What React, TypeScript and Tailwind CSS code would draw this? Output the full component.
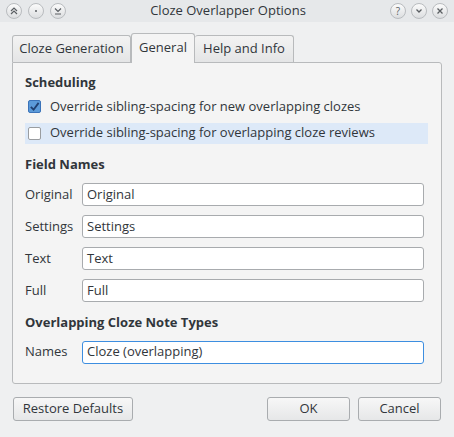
import React from 'react'

function TitleButton({ children }: { children: React.ReactNode }) {
  return (
    <div className="flex h-[16px] w-[16px] items-center justify-center rounded-full border border-[#b9bcbf] bg-gradient-to-b from-[#fbfbfb] to-[#dcdee0] text-[#5a5e62]">
      {children}
    </div>
  )
}

function Check({ checked }: { checked: boolean }) {
  return (
    <div
      className={
        'flex h-[13px] w-[13px] items-center justify-center rounded-[2px] border ' +
        (checked ? 'border-[#3b73b9] bg-[#5b9ad9]' : 'border-[#9a9da0] bg-white')
      }
    >
      {checked && (
        <svg width="11" height="11" viewBox="0 0 12 12">
          <path d="M2 6.5 L5 9.5 L10.5 2" fill="none" stroke="#1f3f70" strokeWidth="2" />
        </svg>
      )}
    </div>
  )
}

function Field({ label, value, focused }: { label: string; value: string; focused?: boolean }) {
  return (
    <div className="flex h-[23px] items-center">
      <div className="w-[57px] shrink-0">{label}</div>
      <div
        className={
          'flex h-full flex-1 items-center rounded-[3px] border bg-white px-[4px] ' +
          (focused ? 'border-[#3d8ee0]' : 'border-[#a8abae]')
        }
      >
        {value}
      </div>
    </div>
  )
}

function Button({ children, className }: { children: React.ReactNode; className: string }) {
  return (
    <div
      className={
        'flex h-[24px] items-center justify-center rounded-[3px] border border-[#a9acaf] bg-gradient-to-b from-[#f7f7f7] to-[#e6e7e8] ' +
        className
      }
    >
      {children}
    </div>
  )
}

export default function App() {
  return (
    <div
      className="flex h-[437px] w-[454px] flex-col bg-[#eff0f1] text-[13px] text-[#31363b]"
      style={{ fontFamily: '"Open Sans", "Noto Sans", sans-serif' }}
    >
      {/* title bar */}
      <div className="relative flex h-[22px] shrink-0 items-center bg-[#e6e8ea] px-[6px]">
        <div className="flex gap-[6px]">
          <TitleButton>
            <svg width="10" height="10" viewBox="0 0 10 10">
              <path d="M2 5 L5 2 L8 5 M2 8 L5 5 L8 8" fill="none" stroke="currentColor" strokeWidth="1.2" />
            </svg>
          </TitleButton>
          <TitleButton>
            <div className="h-[2px] w-[2px] rounded-full bg-[#5a5e62]" />
          </TitleButton>
          <TitleButton>
            <svg width="10" height="10" viewBox="0 0 10 10">
              <path d="M2 2.5 L5 5.5 L8 2.5 M2 8 L8 8" fill="none" stroke="currentColor" strokeWidth="1.2" />
            </svg>
          </TitleButton>
        </div>
        <div className="flex-1 text-center text-[13px]">Cloze Overlapper Options</div>
        <div className="flex gap-[5px]">
          <TitleButton>
            <span className="text-[10px] leading-none">?</span>
          </TitleButton>
          <TitleButton>
            <svg width="10" height="10" viewBox="0 0 10 10">
              <path d="M2.5 3.5 L5 6 L7.5 3.5" fill="none" stroke="currentColor" strokeWidth="1.3" />
            </svg>
          </TitleButton>
          <TitleButton>
            <svg width="10" height="10" viewBox="0 0 10 10">
              <path d="M2.5 2.5 L7.5 7.5 M7.5 2.5 L2.5 7.5" fill="none" stroke="currentColor" strokeWidth="1.3" />
            </svg>
          </TitleButton>
        </div>
      </div>

      {/* tabs */}
      <div className="mt-[11px] flex items-end pl-[12px]">
        <div className="flex h-[27px] w-[119px] items-center justify-center rounded-t-[3px] border border-b-0 border-[#b8babc] bg-gradient-to-b from-[#f3f3f3] to-[#e4e5e6]">
          Cloze Generation
        </div>
        <div className="relative z-10 mb-[-1px] flex h-[30px] w-[64px] items-center justify-center rounded-t-[3px] border border-b-0 border-[#b8babc] bg-[#f4f4f4] pb-[2px]">
          General
        </div>
        <div className="flex h-[27px] w-[99px] items-center justify-center rounded-t-[3px] border border-b-0 border-l-0 border-[#b8babc] bg-gradient-to-b from-[#f3f3f3] to-[#e4e5e6]">
          Help and Info
        </div>
      </div>

      {/* panel */}
      <div className="mx-[12px] flex h-[322px] flex-col rounded-b-[3px] rounded-tr-[3px] border border-[#b8babc] bg-[#f4f4f4] px-[12px] pt-[10px]">
        <div className="font-bold">Scheduling</div>
        <div className="mt-[4px] flex h-[20px] items-center gap-[9px] pl-[3px]">
          <Check checked />
          <span>Override sibling-spacing for new overlapping clozes</span>
        </div>
        <div className="mr-[1px] mt-[6px] flex h-[21px] items-center gap-[9px] bg-[#dde9f8] pl-[3px]">
          <Check checked={false} />
          <span>Override sibling-spacing for overlapping cloze reviews</span>
        </div>

        <div className="mt-[11px] font-bold">Field Names</div>
        <div className="mt-[9px] mr-[5px] flex flex-col gap-[9px]">
          <Field label="Original" value="Original" />
          <Field label="Settings" value="Settings" />
          <Field label="Text" value="Text" />
          <Field label="Full" value="Full" />
        </div>

        <div className="mt-[11px] font-bold">Overlapping Cloze Note Types</div>
        <div className="mt-[8px] mr-[5px]">
          <Field label="Names" value="Cloze (overlapping)" focused />
        </div>
      </div>

      {/* buttons */}
      <div className="mt-[13px] flex px-[13px]">
        <Button className="w-[120px]">Restore Defaults</Button>
        <div className="flex-1" />
        <Button className="w-[83px]">OK</Button>
        <Button className="ml-[8px] w-[83px]">Cancel</Button>
      </div>
    </div>
  )
}
